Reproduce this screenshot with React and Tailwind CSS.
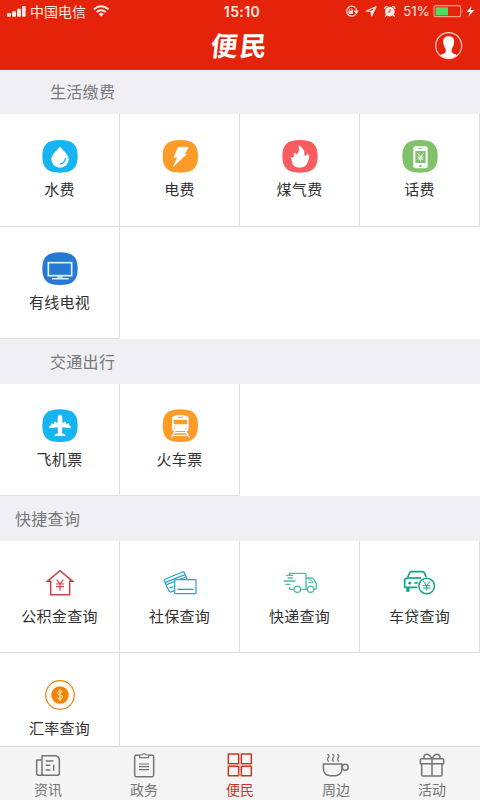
import React from "react";

function Blob({ x, y, color }) {
  return (
    <path
      transform={`translate(${x} ${y})`}
      fill={color}
      d="M-53 0C-53-35-38-49 0-49S53-35 53 0 38 49 0 49-53 35-53 0Z"
    />
  );
}

const CellIcon = ({ box, children }) => (
  <svg viewBox={box} className="block h-10 w-12 shrink-0" fill="none">
    {children}
  </svg>
);

const Water = () => (
  <CellIcon box="108 63 144 120">
    <Blob x={180} y={124} color="#16b4f1" />
    <path d="M180 95C190 108 206 118 206 133A26 25 0 0 1 154 133C154 118 170 108 180 95Z" fill="#fff" />
    <path d="M182 147Q194 144 196 131" stroke="#16b4f1" strokeWidth="4" strokeLinecap="round" />
  </CellIcon>
);

const Power = () => (
  <CellIcon box="468 63 144 120">
    <Blob x={541} y={124} color="#fc9b28" />
    <path d="M534 97H565L553 118H559L520 154L533 127H522Z" fill="#fff" stroke="#fff" strokeWidth="2" strokeLinejoin="round" />
  </CellIcon>
);

const Gas = () => (
  <CellIcon box="108 63 144 120">
    <Blob x={180} y={124} color="#f95c5f" />
    <path
      d="M175 90C189 98 195 107 193 121C198 124 201 121 202 115C204 119 206 121 208 120C207 129 206 134 203 142C200 153 191 158 180 158C166 158 157 151 156 141C155 135 154 129 151 125C157 128 160 128 163 124C160 118 161 112 166 113C166 118 170 119 172 116C178 109 178 101 175 90Z"
      fill="#fff"
    />
  </CellIcon>
);

const Phone = () => (
  <CellIcon box="468 63 144 120">
    <Blob x={540} y={124} color="#80c26a" />
    <rect x="520" y="94" width="43" height="66" rx="6" fill="#fff" />
    <rect x="526" y="108" width="31" height="36" fill="#80c26a" />
    <path d="M536 100H547" stroke="#80c26a" strokeWidth="2.5" />
    <circle cx="541.500" cy="153" r="4" fill="#80c26a" />
    <path d="M533 115L541.500 126L550 115M541.500 126V139M533 126H550M533 132H550" stroke="#fff" strokeWidth="3" />
  </CellIcon>
);

const Television = () => (
  <CellIcon box="108 72 144 120">
    <Blob x={180} y={131} color="#2678d3" />
    <rect x="145" y="113" width="70" height="39" stroke="#d9f6ff" strokeWidth="5" />
    <path d="M172 156H188M156 161H206" stroke="#d9f6ff" strokeWidth="4.500" />
  </CellIcon>
);

const Plane = () => (
  <CellIcon box="108 63 144 120">
    <Blob x={180} y={122} color="#16b4f1" />
    <path
      d="M180 89C184 89 187 93 187 99V112L193 114V110H198V116L203 118V114H207V120L212 124V130L187 127L186 144L196 150V154L180 152L164 154V150L174 144L173 127L148 130V124L153 120V114H157V118L162 116V110H167V114L173 112V99C173 93 176 89 180 89Z"
      fill="#fff"
    />
  </CellIcon>
);

const Train = () => (
  <CellIcon box="468 63 144 120">
    <Blob x={541} y={122} color="#fc9b28" />
    <path d="M522 93Q541 87 560 93Q566 95 566 101V132Q566 138 560 138H522Q516 138 516 132V101Q516 95 522 93Z" fill="#fff" />
    <rect x="521" y="104" width="40" height="14" rx="2" fill="#fc9b28" />
    <path d="M533 97H549" stroke="#fc9b28" strokeWidth="3" />
    <circle cx="524" cy="130" r="2" fill="#fc9b28" />
    <circle cx="558" cy="130" r="2" fill="#fc9b28" />
    <path d="M525 138L515 157M557 138L568 157M524 143H559M520 151H563" stroke="#fff" strokeWidth="4" />
  </CellIcon>
);

const Fund = () => (
  <CellIcon box="108 84 144 120">
    <g stroke="#c94545" strokeWidth="4.600">
      <path d="M142 139L180 107L218 139H209V179H152V139Z" />
      <path d="M170 134L180 147L190 134M180 147V167M168 147H192M168 155H192" strokeWidth="3.400" />
    </g>
  </CellIcon>
);

const Cards = () => (
  <CellIcon box="468 84 144 120">
    <g stroke="#20a5d1" strokeWidth="3.600" strokeLinejoin="round">
      <path d="M523 167L511 171Q508 171 507 168L493 138Q492 134 496 132L548 111Q551 110 553 113L562 134" />
      <path d="M496 142L555 119M499 149L558 126M508 159L520 155" />
      <rect x="524" y="134" width="64" height="42" rx="2.500" fill="#fff" />
      <path d="M532 163H580" strokeWidth="4" />
    </g>
  </CellIcon>
);

const Truck = () => (
  <CellIcon box="108 84 144 120">
    <g stroke="#4abda0" strokeWidth="4" strokeLinecap="round" strokeLinejoin="round">
      <path d="M149 120V115H195Q198 115 198 118V163H183M161 163H149V157" />
      <path d="M198 129H214Q218 129 221 133L229 145V160Q229 163 225 163H223M201 163H198" />
      <path d="M206 135H213L220 143H206" strokeWidth="3" />
      <circle cx="172" cy="163" r="9.500" fill="#fff" />
      <circle cx="212" cy="163" r="9.500" fill="#fff" />
      <path d="M140 121H158M144 129H157M132 138H165M138 148H150" />
    </g>
  </CellIcon>
);

const CarLoan = () => (
  <CellIcon box="468 84 144 120">
    <g stroke="#16a383" strokeWidth="5" strokeLinejoin="round">
      <path d="M559 127L553 113Q551 110 547 110H515Q510 110 508 115L502 129L494 133V157H533" />
      <path d="M502 129H543" />
      <path d="M499 157V170H508V157Z" fill="#16a383" strokeWidth="1" />
      <circle cx="509" cy="144" r="4.500" fill="#16a383" stroke="none" />
      <path d="M523 144H534" />
      <circle cx="560" cy="153" r="28" fill="#fff" stroke="none" />
      <circle cx="560" cy="153" r="23.500" strokeWidth="4.500" />
      <path d="M550 139L560 152L570 139M560 152V167M549 152H571M549 159H571" strokeWidth="3" />
    </g>
  </CellIcon>
);

const Exchange = () => (
  <CellIcon box="108 75 144 120">
    <circle cx="180" cy="135" r="43" fill="#fffdf2" stroke="#d88422" strokeWidth="3.500" />
    <circle cx="180" cy="135" r="26" fill="#f28208" />
    <path d="M188 127Q187 123 180 123T172 129Q172 134 180 135T188 141Q188 147 180 147T172 142M178 118V152M182 118V152" stroke="#ffe0a8" strokeWidth="2.800" />
  </CellIcon>
);

function Cell({ icon: Icon, label, tall }) {
  return (
    <div
      className={`${tall ? "h-[113px]" : "h-[112px]"} flex w-[120px] shrink-0 flex-col items-center border-r border-b border-[#dedee1] bg-white pt-[22px]`}
    >
      <Icon />
      <span className="mt-px whitespace-nowrap text-[15px] leading-6 tracking-[0.3px] text-[#303030]">{label}</span>
    </div>
  );
}

function Section({ title, className, children }) {
  return (
    <section>
      <h2 className={`flex items-center bg-[#efeff4] pb-[2px] text-base tracking-[0.3px] text-[#77777a] ${className}`}>{title}</h2>
      <div className="flex flex-wrap">{children}</div>
    </section>
  );
}

const TabIcon = ({ box, children }) => (
  <svg viewBox={box} className="block h-8 w-12" fill="none" stroke="currentColor" strokeWidth="4.500" strokeLinejoin="round">
    {children}
  </svg>
);

function Tab({ label, active, box, children }) {
  return (
    <button className={`flex w-24 flex-col items-center pt-[3px] ${active ? "text-[#cc3322]" : "text-[#747474]"}`}>
      <TabIcon box={box}>{children}</TabIcon>
      <span className="-mt-px text-sm leading-[16px]">{label}</span>
    </button>
  );
}

function StatusBar() {
  return (
    <div className="grid h-[23px] grid-cols-3 items-center text-[#ffe9e4]">
      <div className="flex items-center pl-[7px]">
        <svg viewBox="0 0 57 36" className="-mt-[2px] h-3 w-[19px]" fill="currentColor">
          <rect x="0" y="24" width="12" height="11" rx="3" />
          <rect x="15" y="19" width="12" height="16" rx="3" />
          <rect x="30" y="11" width="12" height="24" rx="3" />
          <rect x="45" y="3" width="11" height="32" rx="3" />
        </svg>
        <span className="-mt-[2px] ml-[4px] text-sm leading-5">中国电信</span>
        <svg viewBox="279 14 50 36" className="-mt-[2px] ml-[7px] h-3 w-[17px]" fill="none" stroke="currentColor" strokeWidth="6">
          <path d="M281 27Q303 9 325 27M289 35Q303 24 317 35" />
          <path d="M295 40Q303 35 311 40L303 49Z" fill="currentColor" stroke="none" />
        </svg>
      </div>
      <div className="pl-[4px] text-center font-['Inter','Noto_Sans_CJK_SC',sans-serif] text-sm font-semibold tracking-[0.4px]">15:10</div>
      <svg viewBox="240 0 480 69" className="h-[23px] w-40" fill="none" stroke="currentColor" strokeWidth="3.500">
        <path d="M346 23A15 15 0 1 0 347 43" />
        <path d="M347 24Q350 29 350 34M344 33H353L349 40Z" />
        <rect x="326" y="32" width="13" height="10" fill="currentColor" stroke="none" />
        <path d="M328 33V29Q332 22 337 29V33" strokeWidth="2.500" />
        <path d="M379 33L408 20L395 48L393 34Z" strokeLinejoin="round" />
        <path d="M393 34L408 20L395 48Z" fill="currentColor" stroke="none" />
        <circle cx="449.500" cy="35" r="14.500" fill="currentColor" stroke="none" />
        <path d="M434 25Q435 20 441 19M458 19Q464 20 465 25M439 45L436 49M460 45L463 49" strokeWidth="4" strokeLinecap="round" />
        <path d="M450 27V36H443" stroke="#e5230a" strokeWidth="2.500" />
        <text x="490" y="48" fontSize="38" textLength="79" lengthAdjust="spacingAndGlyphs" fill="currentColor" stroke="none" className="font-['Inter',sans-serif]">51%</text>
        <rect x="582" y="17" width="80" height="33" rx="6" stroke="#f69a8a" />
        <rect x="587" y="22" width="37" height="24" fill="#55d95f" stroke="none" />
        <path d="M666 28Q670 33 666 39Z" fill="#f69a8a" stroke="none" />
        <path d="M695 18L680 36H690L685 50L703 30H692Z" fill="#fff" stroke="none" />
      </svg>
    </div>
  );
}

export default function App() {
  return (
    <div className="flex h-[800px] w-[480px] flex-col overflow-hidden bg-white font-['Noto_Sans_CJK_SC',sans-serif]">
      <header className="flex h-[70px] shrink-0 flex-col border-b border-[#d6382a] bg-[#e5230a]">
        <StatusBar />
        <div className="grid h-[46px] grid-cols-[1fr_auto_1fr] items-center">
          <span />
          <h1 className="-mt-[3px] -skew-x-6 text-[27px] leading-[46px] font-bold tracking-[2px] text-white">便民</h1>
          <svg viewBox="584 96 84 84" className="mr-[17px] h-7 w-7 justify-self-end" fill="none">
            <circle cx="625" cy="137" r="39" stroke="#ffd3cb" strokeWidth="3.500" />
            <path
              d="M625 109C638 109 642 117 641 126C641 137 637 142 634 147V156C636 161 643 162 650 165Q639 175 625 175T600 165C607 162 614 161 616 156V147C613 142 609 137 609 126C608 117 612 109 625 109Z"
              fill="#fff"
            />
          </svg>
        </div>
      </header>

      <main className="min-h-0 flex-1 overflow-hidden">
        <Section title="生活缴费" className="h-11 pl-[50px]">
          <Cell icon={Water} label="水费" tall />
          <Cell icon={Power} label="电费" tall />
          <Cell icon={Gas} label="煤气费" tall />
          <Cell icon={Phone} label="话费" tall />
          <Cell icon={Television} label="有线电视" />
        </Section>
        <Section title="交通出行" className="h-[45px] pl-[50px]">
          <Cell icon={Plane} label="飞机票" />
          <Cell icon={Train} label="火车票" />
        </Section>
        <Section title="快捷查询" className="h-[45px] pl-[15px]">
          <Cell icon={Fund} label="公积金查询" />
          <Cell icon={Cards} label="社保查询" />
          <Cell icon={Truck} label="快递查询" />
          <Cell icon={CarLoan} label="车贷查询" />
          <Cell icon={Exchange} label="汇率查询" />
        </Section>
      </main>

      <nav className="flex h-[54px] shrink-0 border-t border-[#d3d3d3] bg-[#f5f5f5]">
        <Tab label="资讯" box="72 300 144 96">
          <path d="M126 376V317H167Q178 320 178 331V370Q178 376 172 376H115Q110 376 110 370V330H126" />
          <path d="M137 333H160M137 346H151M137 360H151M161 344V362" />
        </Tab>
        <Tab label="政务" box="360 300 144 96">
          <path d="M419 316H408Q404 316 404 320V376Q404 380 408 380H457Q461 380 461 376V320Q461 316 457 316H446" />
          <path d="M419 323V315H427Q432 307 438 315H446V323ZM417 342H447M417 350H447M417 359H447" strokeWidth="3.400" />
        </Tab>
        <Tab label="便民" box="648 300 144 96" active>
          <path d="M685 312H716V341H685ZM724 312H754V341H724ZM685 349H716V377H685ZM724 349H754V377H724Z" />
        </Tab>
        <Tab label="周边" box="216 45 144 96">
          <path d="M250 87H306V97Q306 122 286 122H270Q250 122 250 97Z" />
          <circle cx="315.500" cy="96.500" r="9" />
          <path d="M262 58Q270 61 265 67T266 80M277 58Q285 61 280 67T281 80M292 58Q300 61 295 67T296 80" strokeWidth="3.600" />
        </Tab>
        <Tab label="活动" box="504 45 144 96">
          <path d="M545 71H607Q611 71 611 75V86H541V75Q541 71 545 71ZM545 86V119Q545 123 549 123H601Q606 123 606 119V86M576 71V123" />
          <path d="M576 71Q568 57 559 58Q551 59 552 70M576 71Q584 57 592 58Q601 59 600 70" />
        </Tab>
      </nav>
    </div>
  );
}
